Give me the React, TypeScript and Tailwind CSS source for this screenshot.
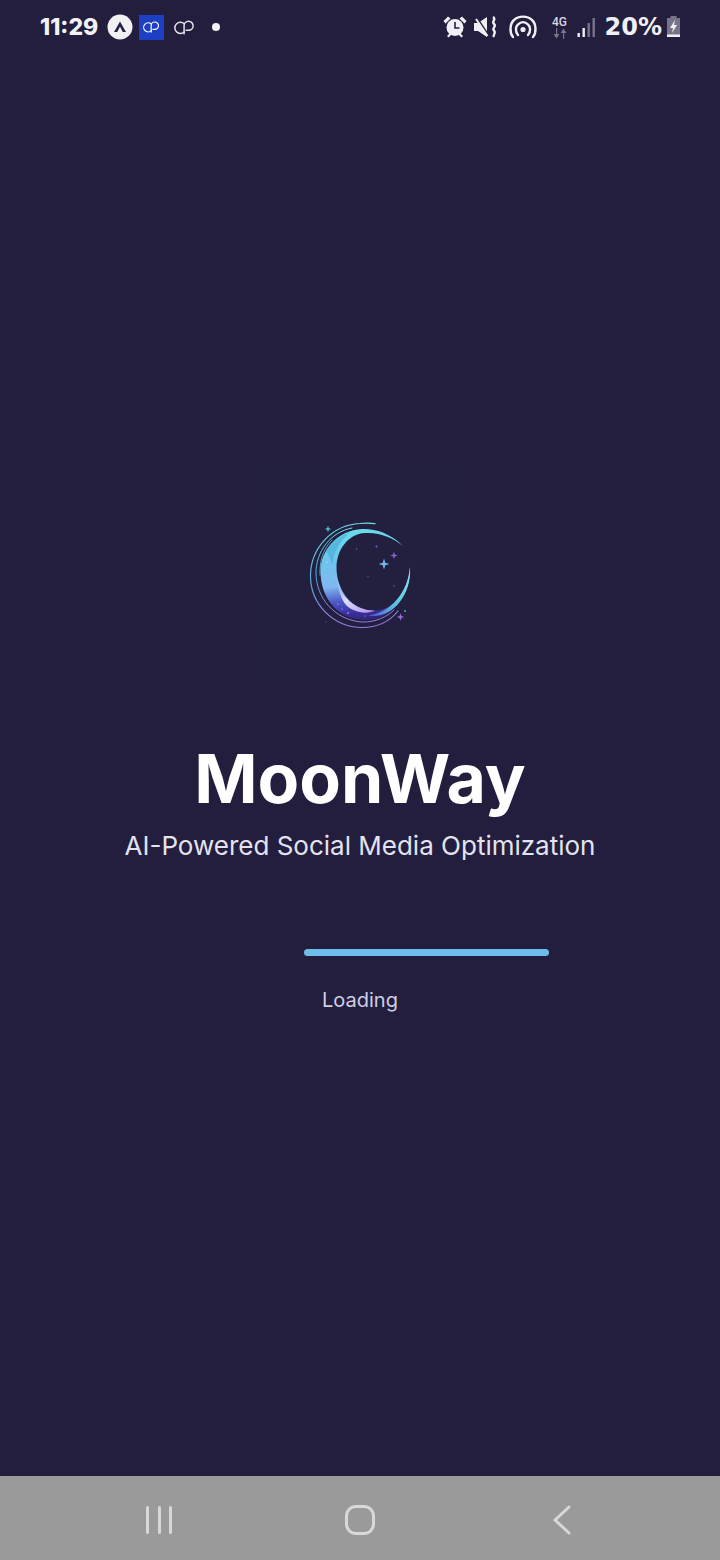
import React from "react";

function Star({ x, y, r, fill }: { x: number; y: number; r: number; fill: string }) {
  const k = r * 0.24;
  return (
    <path
      fill={fill}
      d={`M${x} ${y - r}L${x + k} ${y - k}L${x + r} ${y}L${x + k} ${y + k}L${x} ${y + r}L${x - k} ${y + k}L${x - r} ${y}L${x - k} ${y - k}Z`}
    />
  );
}

function MoonLogo() {
  const dots: [number, number, string, number][] = [
    [66.5, 44, "#5a6fb8", 0.7],
    [78, 71.5, "#6a4fb0", 0.7],
    [104, 81, "#5f7fc0", 0.7],
    [36, 117, "#7a5ac8", 0.6],
    [115, 106, "#4fb8c8", 0.9],
    [37, 57, "#e8f8ff", 0.6],
    [44, 72, "#e8f8ff", 0.4],
    [58, 108, "#e8e0ff", 0.7],
    [48, 99, "#dfe8ff", 0.5],
    [75, 111, "#cfc8ff", 0.5],
    [52, 104, "#cfe0ff", 0.5],
  ];
  return (
    <svg width="140" height="140" viewBox="0 0 140 140" fill="none">
      <defs>
        <linearGradient id="body" x1="0.4" y1="0" x2="0.55" y2="1">
          <stop offset="0" stopColor="#68dde8" />
          <stop offset="0.3" stopColor="#6fc4ee" />
          <stop offset="0.58" stopColor="#80b8f0" />
          <stop offset="0.76" stopColor="#4a55c4" />
          <stop offset="0.9" stopColor="#3a2f9e" />
          <stop offset="1" stopColor="#2c2572" />
        </linearGradient>
        <linearGradient id="inner" x1="0" y1="0" x2="1" y2="1">
          <stop offset="0" stopColor="#bfe4f8" stopOpacity="0.1" />
          <stop offset="0.45" stopColor="#e0dcfb" />
          <stop offset="1" stopColor="#a88ce8" />
        </linearGradient>
        <linearGradient id="rim" x1="1" y1="0" x2="0" y2="1">
          <stop offset="0" stopColor="#8aeaee" />
          <stop offset="0.6" stopColor="#56c0e0" />
          <stop offset="1" stopColor="#5a4ac8" />
        </linearGradient>
        <linearGradient id="ring" x1="0" y1="0" x2="0" y2="1">
          <stop offset="0" stopColor="#6fdde6" />
          <stop offset="0.55" stopColor="#5aa8d8" />
          <stop offset="1" stopColor="#9a78e0" />
        </linearGradient>
      </defs>
      <path
        fill="url(#body)"
        d="M112.7 40.7C100 28 85 23.5 72 24C48 25 30.5 45 30.5 66C30.5 95 50 115 75 115C100 115 121 92 120 62C118 85 105 105 85 105.5C62 106 46.5 85 46.5 63C46.5 45 58 29 75 28C90 27 103 33 112.7 40.7Z"
      />
      <path fill="#3f9fd0" fillOpacity="0.5" d="M60 27C50 31 41 38 36 46C39 50 41 56 42 60C44 46 50 36 60 27Z" />
      <path fill="url(#inner)" d="M47 72C50 92 66 106 85 105.5C76 110 63 107 56 100C51 94 47.5 83 47 72Z" />
      <path fill="url(#rim)" d="M120 62C122 92 100 115 78 110.5C100 108 118 88 120 62Z" />
      <path
        stroke="url(#ring)"
        strokeWidth="1.2"
        strokeLinecap="round"
        d="M85 18.7C80 18 75 18 70 18.5C42 20 20.5 43 20.5 71C20.5 99 43 122 72 122.5C88 122.5 100 116 108 106"
      />
      <path
        stroke="url(#ring)"
        strokeWidth="1"
        strokeLinecap="round"
        d="M62 23C40 27 26 47 26 68C26 92 44 115 72 117C85 117.5 97 112 104 105"
      />
      <path stroke="#6ac0dc" strokeWidth="0.8" strokeLinecap="round" d="M42 35C32 45 29.5 58 30 70" />
      <Star x={94} y={59} r={5.5} fill="#6fb6ee" />
      <Star x={104} y={50.5} r={3.8} fill="#8a62d0" />
      <Star x={86.5} y={41.5} r={1.8} fill="#7a5cc4" />
      <Star x={110.5} y={112} r={3.8} fill="#9a6ae0" />
      <Star x={38} y={24} r={3.4} fill="#4fc8d8" />
      {dots.map(([x, y, c, r]) => (
        <circle key={`${x}-${y}`} cx={x} cy={y} r={r} fill={c} />
      ))}
    </svg>
  );
}

function CpMark({ className = "" }: { className?: string }) {
  return (
    <svg viewBox="0 0 20 14" className={className} fill="none" stroke="currentColor" strokeWidth="1.4" strokeLinecap="round">
      <path d="M9.8 3.6A5.3 5.3 0 1 0 9.8 11.2" />
      <path d="M9.6 13V5.4A4.3 4.3 0 1 1 13.9 9.7H11.6" />
    </svg>
  );
}

function StatusLeft() {
  return (
    <div className="flex items-center">
      <span className="w-[60px] text-[23px] leading-none font-extrabold text-[#f2f2f6]">11:29</span>
      <svg width="26" height="26" viewBox="0 0 26 26" className="ml-[7px]">
        <circle cx="13" cy="13" r="12.5" fill="#f1f1f4" />
        <path d="M13 7.5L19 18H15.8L13 12.8L10.2 18H7Z" fill="#262042" />
      </svg>
      <div className="ml-[6px] flex h-[25px] w-[25px] items-center justify-center bg-[#1c3fc4] text-white">
        <CpMark className="h-[12px] w-[17px]" />
      </div>
      <CpMark className="ml-[10px] h-[15px] w-[21px] text-[#e6e6ea]" />
      <div className="ml-[17px] h-[8px] w-[8px] rounded-full bg-[#f2f2f6]" />
    </div>
  );
}

function StatusRight() {
  return (
    <div className="flex items-center">
      <svg width="24" height="26" viewBox="0 0 24 26" fill="#f0f0f4">
        <circle cx="12" cy="13.5" r="8.5" />
        <path d="M0.5 7L5 2.5L7.5 4.5L2.5 9.5Z M23.5 7L19 2.5L16.5 4.5L21.5 9.5Z M4 22L7 19L8.5 20.5L5.5 23.5Z M20 22L17 19L15.5 20.5L18.5 23.5Z" />
        <path d="M12 8V14H16.5" stroke="#262042" strokeWidth="1.6" fill="none" />
      </svg>
      <svg width="24" height="26" viewBox="0 0 24 26" className="ml-[7px]">
        <path d="M0 9H4L13 3V23L4 17H0Z" fill="#f0f0f4" />
        <path d="M2 2.5L15 22" stroke="#262042" strokeWidth="2" />
        <path d="M2 5L13.5 22" stroke="#f0f0f4" strokeWidth="2" />
        <path d="M19 3C23 5.5 17 7.5 20 10C23 12.5 17.5 14 20 16.5C22.5 19 18.5 20.5 20 23" stroke="#f0f0f4" strokeWidth="2.4" fill="none" />
      </svg>
      <svg width="28" height="26" viewBox="0 0 28 26" fill="none" stroke="#f0f0f4" strokeWidth="2.4" strokeLinecap="round" className="ml-[11px]">
        <path d="M4 23C0.5 19 0.5 10 5 6C9.5 1.5 18.5 1.5 23 6C27.5 10 27.5 19 24 23" />
        <path d="M9 21C6 17.5 6.5 12.5 9 10.5C12 7.5 16 7.5 19 10.5C21.5 12.5 22 17.5 19 21" />
        <circle cx="14" cy="15.5" r="2.6" fill="#f0f0f4" stroke="none" />
      </svg>
      <div className="ml-[14px] flex w-[18px] flex-col items-center">
        <span className="text-[12px] leading-[12px] font-medium text-[#d8d8e0] font-['Roboto',sans-serif]">4G</span>
        <svg width="16" height="11" viewBox="0 0 16 11" fill="#77748a">
          <path d="M4 11V5H1.5L4.5 0.5L7.5 5H5.2V11Z" transform="matrix(1 0 0 -1 0 11)" />
          <path d="M11 11V5H8.5L11.5 0.5L14.5 5H12.2V11Z" />
        </svg>
      </div>
      <svg width="20" height="22" viewBox="0 0 20 22" className="ml-[8px]">
        <rect x="0.5" y="17" width="2.4" height="4" fill="#f0f0f4" />
        <rect x="5.5" y="12" width="2.4" height="9" fill="#f0f0f4" />
        <rect x="10.5" y="7" width="2.4" height="14" fill="#77748a" />
        <rect x="15.5" y="2" width="2.4" height="19" fill="#77748a" />
      </svg>
      <span className="ml-[8px] text-[24px] leading-none font-bold text-[#f0f0f4] font-['DejaVu_Sans',sans-serif]">
        20%
      </span>
      <svg width="15" height="22" viewBox="0 0 15 22" className="ml-[4px]">
        <path d="M4.5 0H10.5V2H14V20H1V2H4.5Z" fill="#77748a" />
        <rect x="1" y="18.5" width="13" height="2.5" fill="#f0f0f4" />
        <path d="M9 4L4 12H7L6 17L11 9H8Z" fill="#f0f0f4" />
      </svg>
    </div>
  );
}

export default function App() {
  return (
    <div className="flex h-[1560px] w-[720px] flex-col overflow-hidden bg-[#231d3e] font-['Inter',sans-serif]">
      <div className="flex h-[54px] shrink-0 items-center justify-between pr-[39px] pl-[40px]">
        <StatusLeft />
        <StatusRight />
      </div>
      <main className="flex flex-1 flex-col items-center pt-[411px]">
        <div className="flex h-[220px] w-[220px] items-center justify-center bg-[#231f3f]">
          <MoonLogo />
        </div>
        <h1 className="mt-[49px] text-[68px] leading-[88px] font-bold text-white">MoonWay</h1>
        <p className="mt-[8px] text-[26px] leading-[32px] text-[#e2e3ef]">
          AI-Powered Social Media Optimization
        </p>
        <div className="mt-[87px] flex w-full pl-[304px]">
          <div className="h-[7px] w-[245px] rounded-full bg-[#6fbdec]" />
        </div>
        <p className="mt-[31px] text-[20px] leading-[26px] text-[#cfd0e4]">Loading</p>
      </main>
      <nav className="flex h-[84px] shrink-0 items-center bg-[#9a9a9a] pt-[4px] pl-[146px]">
        <div className="flex w-[26px] justify-between">
          <div className="h-[28px] w-[3px] rounded-full bg-[#d8d8d8]" />
          <div className="h-[28px] w-[3px] rounded-full bg-[#d8d8d8]" />
          <div className="h-[28px] w-[3px] rounded-full bg-[#d8d8d8]" />
        </div>
        <div className="ml-[173px] h-[30px] w-[30px] rounded-[11px] border-[3px] border-[#d8d8d8]" />
        <svg width="18" height="30" viewBox="0 0 18 30" fill="none" stroke="#d8d8d8" strokeWidth="3" strokeLinecap="round" strokeLinejoin="round" className="ml-[178px]">
          <path d="M16 2L2 15L16 28" />
        </svg>
      </nav>
    </div>
  );
}
